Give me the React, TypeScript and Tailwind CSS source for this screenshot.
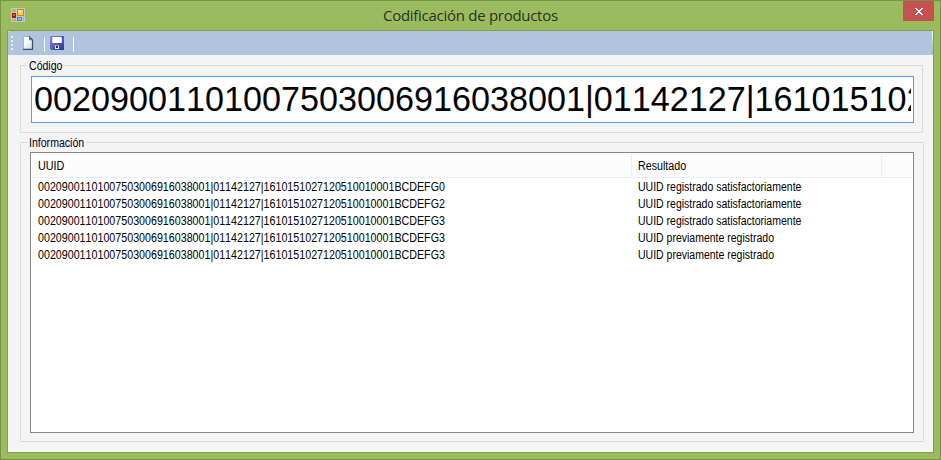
import React from "react";

const CODE = "00209001101007503006916038001|01142127|1610151027120510010001BCDEFG";
const OK = "UUID registrado satisfactoriamente";
const DUP = "UUID previamente registrado";

const rows = [
  { uuid: CODE + "0", result: OK },
  { uuid: CODE + "2", result: OK },
  { uuid: CODE + "3", result: OK },
  { uuid: CODE + "3", result: DUP },
  { uuid: CODE + "3", result: DUP },
];

function FormIcon() {
  return (
    <svg width="14" height="14" viewBox="0 0 14 14" shapeRendering="crispEdges">
      <rect width="14" height="14" fill="#c6c8c0" />
      <rect x="1" y="1" width="4" height="3" fill="#a3bb75" />
      <rect x="1" y="11" width="4" height="2" fill="#a3bb75" />
      <rect x="1" y="5" width="4" height="5" fill="#a81414" />
      <rect x="2" y="6" width="2" height="2" fill="#e2564c" />
      <rect x="6" y="1" width="7" height="7" fill="#c58a13" />
      <rect x="7" y="2" width="5" height="5" fill="#f8cf4c" />
      <rect x="7" y="2" width="3" height="2" fill="#fde391" />
      <rect x="6" y="9" width="5" height="4" fill="#4f83d8" />
      <rect x="7" y="10" width="3" height="2" fill="#8db8f5" />
      <rect x="12" y="9" width="1" height="4" fill="#a3bb75" />
    </svg>
  );
}

function NewIcon() {
  return (
    <svg width="12" height="14" viewBox="0 0 12 14">
      <defs>
        <linearGradient id="page" x1="0" y1="0" x2="1" y2="1">
          <stop offset="0.35" stopColor="#ffffff" />
          <stop offset="1" stopColor="#c4d3e4" />
        </linearGradient>
      </defs>
      <path d="M1.5 0.5H7.5L10.5 4V13H1.5Z" fill="url(#page)" />
      <path d="M1.5 13V0.5H7" fill="none" stroke="#a9b9cd" />
      <path d="M7 0.5L10.5 4V13.3H1" fill="none" stroke="#3a5069" strokeWidth="1.2" />
      <path d="M7 1V4.3H10.3Z" fill="#5e7797" />
    </svg>
  );
}

function SaveIcon() {
  return (
    <svg width="14" height="14" viewBox="0 0 14 14" shapeRendering="crispEdges">
      <defs>
        <linearGradient id="disk" x1="0" y1="0" x2="1" y2="1">
          <stop offset="0" stopColor="#8587e2" />
          <stop offset="1" stopColor="#2d3195" />
        </linearGradient>
      </defs>
      <path d="M0 0H14V14H1L0 13Z" fill="url(#disk)" />
      <rect x="2" y="1" width="10" height="6" fill="#cfd6f5" />
      <rect x="3" y="1" width="8" height="6" fill="#ffffff" />
      <rect x="12" y="1" width="1" height="1" fill="#252a83" />
      <rect x="4" y="9" width="6" height="4" fill="#4b4f78" />
      <rect x="4" y="9" width="5" height="1" fill="#9a9db5" />
      <rect x="5" y="10" width="4" height="3" fill="#e6e8f0" />
      <rect x="6" y="10" width="2" height="2" fill="#26294a" />
    </svg>
  );
}

function CloseIcon() {
  return (
    <svg width="8" height="7" viewBox="0 0 8 7" shapeRendering="crispEdges" fill="#ffffff">
      <path d="M0 0H2V1H3V2H5V1H6V0H8V1H7V2H6V3H5V4H6V5H7V6H8V7H6V6H5V5H3V6H2V7H0V6H1V5H2V4H3V3H2V2H1V1H0Z" />
    </svg>
  );
}

export default function App() {
  return (
    <div className="flex h-[460px] w-[941px] flex-col overflow-hidden border border-[#789147] bg-[#9bbb5f] px-1.5 pb-1.5 font-['Liberation_Sans',Arial,sans-serif] text-black [font-kerning:none]">
      <header className="flex h-[29px] shrink-0 items-start">
        <div className="ml-1 mt-[7px] w-[14px]">
          <FormIcon />
        </div>
        <h1 className="ml-[358px] mt-[3px] grow whitespace-nowrap font-['Open_Sans','Noto_Sans',sans-serif] text-[15px] leading-[22px] tracking-[-0.28px] text-[#2c3322]">
          Codificación de productos
        </h1>
        <button className="flex h-5 w-[31px] items-center justify-center bg-[#c75050] pt-px">
          <CloseIcon />
        </button>
      </header>

      <main className="flex grow flex-col border border-[#83a04a] bg-[#f4f4f4]">
        <nav className="flex h-6 shrink-0 rounded-tl-[2px] bg-[#b0c4de]">
          <div className="ml-[3px] mt-[5px] flex w-[3px] flex-col gap-[2px]">
            <i className="size-[2px] bg-[#e9edf3]" />
            <i className="size-[2px] bg-[#e9edf3]" />
            <i className="size-[2px] bg-[#e9edf3]" />
            <i className="size-[2px] bg-[#e9edf3]" />
          </div>
          <div className="ml-2 mt-[5px]">
            <NewIcon />
          </div>
          <div className="ml-[10px] mt-[6px] h-[15px] w-px bg-[#f5f5f5]" />
          <div className="ml-[5px] mt-[5px]">
            <SaveIcon />
          </div>
          <div className="ml-[9px] mt-[6px] h-[15px] w-px bg-[#f5f5f5]" />
          <div className="ml-auto h-[23px] w-px bg-linear-to-b from-white to-[#a3a9b2]" />
        </nav>

        <fieldset className="ml-3 mt-1 h-[74px] w-[903px] border border-[#dcdcdc] pl-[10px]">
          <legend className="ml-[-4px] h-[13px] w-[37px] whitespace-nowrap pl-[1.5px] text-[12px] leading-[14px]">
            <span className="inline-block origin-left scale-x-[0.88] text-[#00001c]">Código</span>
          </legend>
          <input
            readOnly
            value={CODE + "0"}
            className="mt-[4px] block h-[47px] w-[883px] border border-[#569de5] bg-white px-[2px] text-[34.16px] outline-none [font-kerning:none]"
          />
        </fieldset>

        <fieldset className="ml-3 mt-[3px] h-[306px] w-[904px] border border-[#dcdcdc] pl-[9px]">
          <legend className="ml-[-3px] h-[13px] w-[59px] whitespace-nowrap pl-[1.5px] text-[12px] leading-[14px]">
            <span className="inline-block origin-left scale-x-[0.88] text-[#00001c]">Información</span>
          </legend>
          <div className="mt-[3px] h-[281px] w-[884px] border border-[#828790] bg-white p-px text-[12px]">
            <div className="flex h-[24px] border-b border-[#e5eff8] bg-[#fcfcfc] leading-[24px]">
              <div className="w-[600px] border-r border-[#e5eff8] pl-[6px]">
                <span className="inline-block origin-left scale-x-[0.9]">UUID</span>
              </div>
              <div className="w-[250px] border-r border-[#e5eff8] pl-[6px]">
                <span className="inline-block origin-left scale-x-[0.89]">Resultado</span>
              </div>
            </div>
            <div className="pt-px">
              {rows.map((r, i) => (
                <div key={i} className="flex h-[17px] whitespace-nowrap leading-[17px]">
                  <div className="w-[600px] pl-[6px]">
                    <span className="inline-block origin-left scale-x-[0.891]">{r.uuid}</span>
                  </div>
                  <div className="pl-[6px]">
                    <span className="inline-block origin-left scale-x-[0.875]">{r.result}</span>
                  </div>
                </div>
              ))}
            </div>
          </div>
        </fieldset>
      </main>
    </div>
  );
}
